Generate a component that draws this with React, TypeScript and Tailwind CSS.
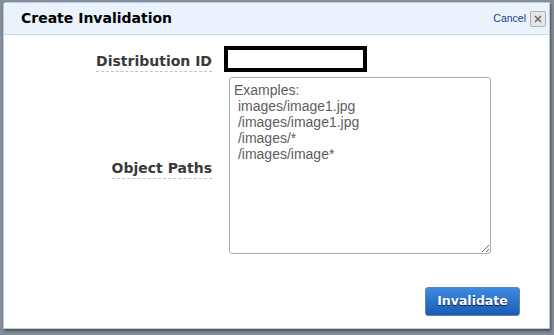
export default function App() {
  const placeholder =
    "Examples:\n images/image1.jpg\n /images/image1.jpg\n /images/*\n /images/image*";

  return (
    <div className="w-[554px] h-[335px] bg-[#868e98] pt-[2px] pl-[3px] overflow-hidden">
      <div className="w-[547px] h-[327px] bg-white border border-[#b7cce6] rounded-tl-[3px] shadow-[1px_2px_3px_rgba(30,35,45,0.6)] flex flex-col">
        {/* Header */}
        <div className="h-[32px] shrink-0 bg-[#eaf2fc] border-b border-[#c3d8ef] flex items-center justify-between pl-[17px] pr-[3px]">
          <span className="font-['DejaVu_Sans',sans-serif] font-bold text-[14px] text-black">
            Create Invalidation
          </span>
          <div className="flex items-center gap-[4px]">
            <a className="font-['Liberation_Sans',Arial,sans-serif] text-[10.5px] text-[#1f3a8c] cursor-pointer">
              Cancel
            </a>
            <button className="w-[16px] h-[16px] bg-[#e6e6e6] border border-[#b0b0b0] rounded-[2px] flex items-center justify-center">
              <svg width="8" height="8" viewBox="0 0 8 8">
                <path d="M1 1L7 7M7 1L1 7" stroke="#666" strokeWidth="1.5" />
              </svg>
            </button>
          </div>
        </div>

        {/* Body */}
        <div className="flex flex-col pt-[11px]">
          <div className="flex items-center">
            <div className="w-[208px] flex justify-end pt-[5px]">
              <span className="font-['DejaVu_Sans',sans-serif] font-bold text-[14px] text-[#3b3a38] border-b border-dashed border-[#c4c4c4] leading-[19px]">
                Distribution ID
              </span>
            </div>
            <div className="ml-[12px] w-[143px] h-[26px] border-[4px] border-black bg-white" />
          </div>

          <div className="flex items-center mt-[5px]">
            <div className="w-[208px] flex justify-end pt-[6px]">
              <span className="font-['DejaVu_Sans',sans-serif] font-bold text-[14px] text-[#3b3a38] border-b border-dashed border-[#c4c4c4] leading-[19px]">
                Object Paths
              </span>
            </div>
            <textarea
              placeholder={placeholder}
              className="ml-[17px] w-[262px] h-[177px] border border-[#acacac] rounded-[3px] px-[4px] pt-[4px] font-['Liberation_Sans',Arial,sans-serif] text-[14px] leading-[16px] text-[#333] placeholder:text-[#5e5e5e] outline-none resize"
            />
          </div>

          <div className="flex justify-end mt-[33px] pr-[29px]">
            <button className="w-[95px] h-[29px] rounded-[3px] border border-[#5b85b8] bg-gradient-to-b from-[#3d8ae0] to-[#1a5cb4] font-['DejaVu_Sans',sans-serif] font-bold text-[12.5px] text-white [text-shadow:0_1px_1px_rgba(0,0,40,0.8)]">
              Invalidate
            </button>
          </div>
        </div>
      </div>
    </div>
  );
}
